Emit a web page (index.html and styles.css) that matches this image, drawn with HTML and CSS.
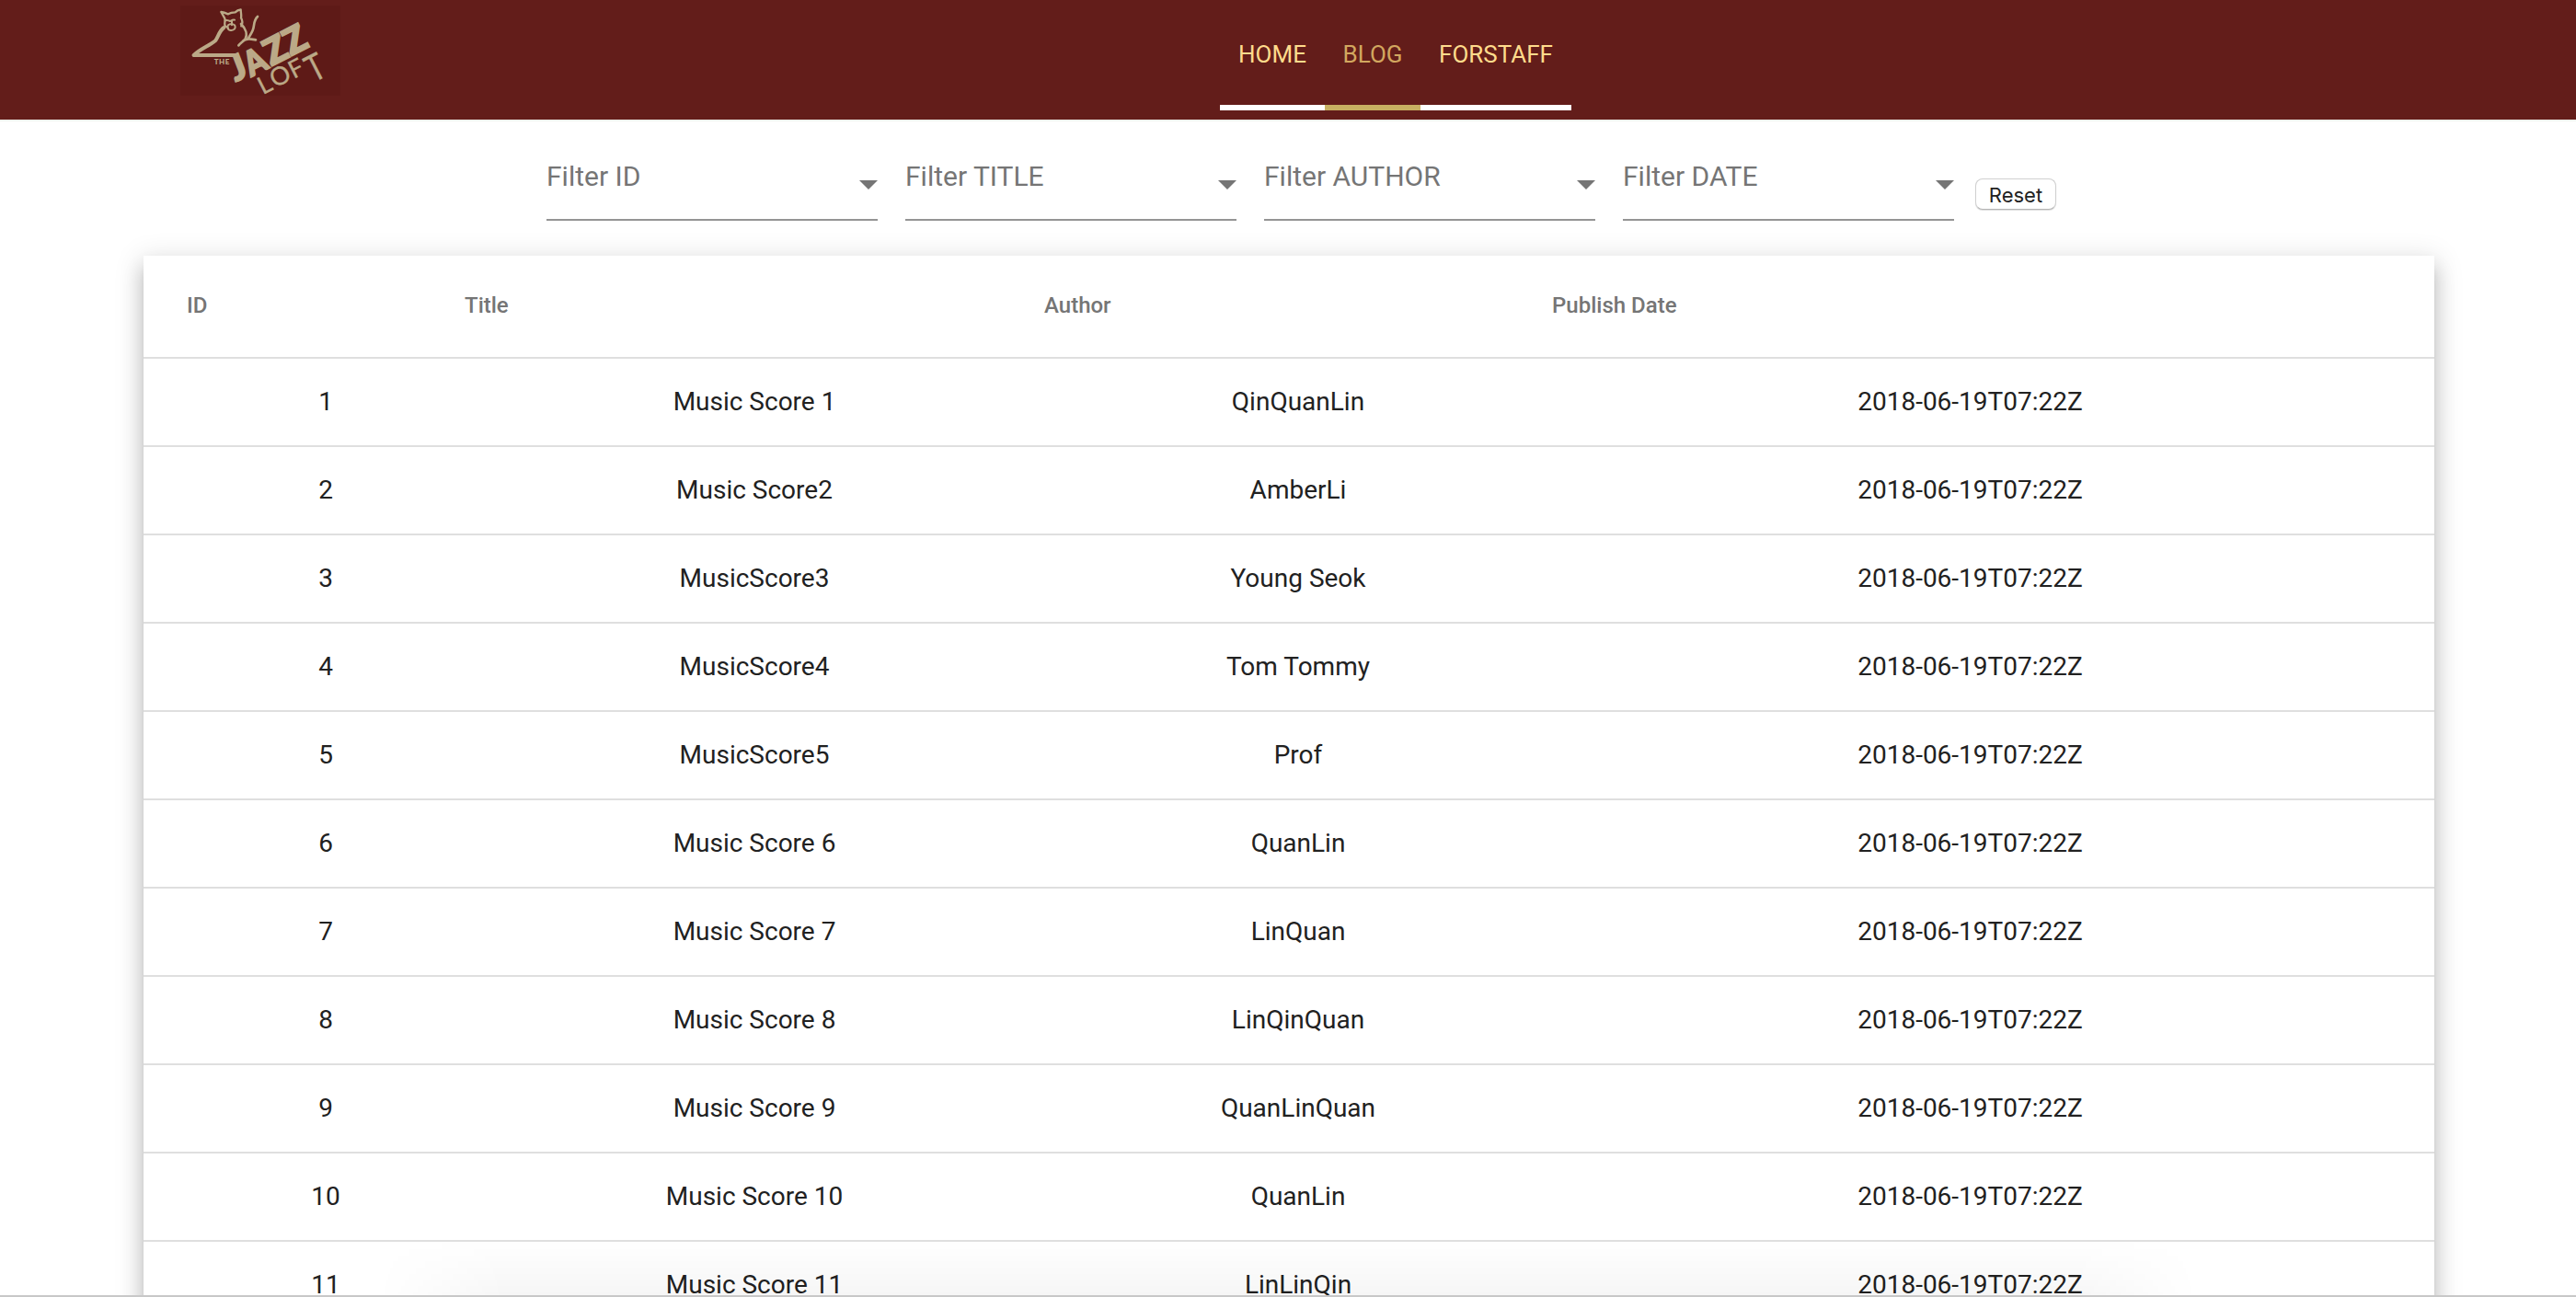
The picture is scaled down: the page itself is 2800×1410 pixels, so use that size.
FILE: index.html
```html
<!DOCTYPE html>
<html lang="en">
<head>
<meta charset="utf-8">
<title>The Jazz Loft - Blog</title>
<link rel="stylesheet" href="styles.css">
</head>
<body>
<header class="topbar">
  <svg class="logo" viewBox="48 18 522 294" role="img" aria-label="The Jazz Loft">
    <g class="logo-line">
      <path d="M190 90C176 100 172 118 163 132C142 150 112 160 92 180H230L240 196" stroke-width="12"/>
      <path d="M194 86C190 74 197 66 192 58L181 39C190 40 197 43 204 46C212 41 220 40 227 40C232 35 238 32 245 31C245 42 248 49 246 58C252 68 251 77 247 85" stroke-width="7"/>
      <path d="M194 68C199 62 205 68 210 69C216 66 220 63 225 65M216 70V82M204 82C199 93 206 100 214 99C224 99 230 91 225 82C220 77 209 77 204 82M195 85L204 91" stroke-width="6"/>
      <path d="M246 78C262 94 267 113 260 127C253 136 244 140 238 148M254 132C268 125 276 127 294 130M300 54C285 68 291 84 284 99C279 111 273 118 269 127" stroke-width="8"/>
    </g>
    <g class="logo-jazz">
      <text transform="translate(228 267) rotate(-25) skewX(-4)" font-size="112">J</text>
      <text transform="translate(279 251) rotate(-27)" font-size="112" textLength="68" lengthAdjust="spacingAndGlyphs">A</text>
      <text transform="translate(345 216) rotate(-27)" font-size="118">Z</text>
      <text transform="translate(409 183) rotate(-27)" font-size="118">Z</text>
    </g>
    <text class="logo-the" x="158" y="210" textLength="50">THE</text>
    <g class="logo-loft">
      <text transform="translate(317 310) rotate(-27)" font-size="80">L</text>
      <text transform="translate(357 288) rotate(-27)" font-size="82">O</text>
      <text transform="translate(418 258) rotate(-27)" font-size="80">F</text>
      <text transform="translate(482 270) rotate(-27)" font-size="120" textLength="56" lengthAdjust="spacingAndGlyphs">T</text>
    </g>
  </svg>
  <nav class="tabs">
    <a class="tab tab-home">HOME</a>
    <a class="tab tab-blog active">BLOG</a>
    <a class="tab tab-staff">FORSTAFF</a>
  </nav>
</header>
<main>
  <form class="filters">
    <div class="select"><span>Filter ID</span><i class="arrow"></i></div>
    <div class="select"><span>Filter TITLE</span><i class="arrow"></i></div>
    <div class="select"><span>Filter AUTHOR</span><i class="arrow"></i></div>
    <div class="select"><span>Filter DATE</span><i class="arrow"></i></div>
    <button class="reset" type="button">Reset</button>
  </form>
  <section class="card">
    <div class="row head"><span>ID</span><span>Title</span><span>Author</span><span>Publish Date</span></div>
    <div class="row"><span>1</span><span>Music Score 1</span><span>QinQuanLin</span><span>2018-06-19T07:22Z</span></div>
    <div class="row"><span>2</span><span>Music Score2</span><span>AmberLi</span><span>2018-06-19T07:22Z</span></div>
    <div class="row"><span>3</span><span>MusicScore3</span><span>Young Seok</span><span>2018-06-19T07:22Z</span></div>
    <div class="row"><span>4</span><span>MusicScore4</span><span>Tom Tommy</span><span>2018-06-19T07:22Z</span></div>
    <div class="row"><span>5</span><span>MusicScore5</span><span>Prof</span><span>2018-06-19T07:22Z</span></div>
    <div class="row"><span>6</span><span>Music Score 6</span><span>QuanLin</span><span>2018-06-19T07:22Z</span></div>
    <div class="row"><span>7</span><span>Music Score 7</span><span>LinQuan</span><span>2018-06-19T07:22Z</span></div>
    <div class="row"><span>8</span><span>Music Score 8</span><span>LinQinQuan</span><span>2018-06-19T07:22Z</span></div>
    <div class="row"><span>9</span><span>Music Score 9</span><span>QuanLinQuan</span><span>2018-06-19T07:22Z</span></div>
    <div class="row"><span>10</span><span>Music Score 10</span><span>QuanLin</span><span>2018-06-19T07:22Z</span></div>
    <div class="row"><span>11</span><span>Music Score 11</span><span>LinLinQin</span><span>2018-06-19T07:22Z</span></div>
  </section>
</main>
<div class="bottom-edge"></div>
</body>
</html>
```
FILE: styles.css
```css
* { box-sizing: border-box; }

html, body {
  margin: 0;
  height: 1410px;
  overflow: hidden;
}

body {
  position: relative;
  background: #fff;
  font-family: Roboto, "Liberation Sans", sans-serif;
  color: #212121;
}

.topbar {
  display: flex;
  height: 130px;
  padding-left: 196px;
  background: #631d1a;
  box-shadow: 0 2px 0 #f0f3ee;
}

.logo {
  width: 174px;
  height: 98px;
  margin-top: 6px;
  background: #5e1a17;
  overflow: visible;
}

.logo-line { fill: none; stroke: #bba987; stroke-linecap: round; stroke-linejoin: round; }
.logo-jazz { fill: #bba987; stroke: #bba987; stroke-width: 6px; font-family: Lato, sans-serif; font-weight: 900; }
.logo-the { fill: #bba987; font-family: Lato, sans-serif; font-weight: 900; font-size: 24px; }
.logo-loft { fill: #bba987; stroke: #bba987; stroke-width: 1px; font-family: Lato, sans-serif; font-weight: 400; }

.tabs {
  display: flex;
  height: 120px;
  margin-left: 956px;
}

.tab {
  display: flex;
  justify-content: center;
  padding-top: 44px;
  border-bottom: 6px solid #fff;
  font-size: 26px;
  line-height: 30px;
  color: #ffdb8c;
}

.tab-home { width: 114px; }
.tab-blog { width: 104px; }
.tab-staff { width: 164px; }
.tab.active { color: #d2a75f; border-color: #c8b062; }

.filters {
  display: flex;
  height: 148px;
  padding: 36px 0 0 594px;
  gap: 30px;
}

.select {
  display: flex;
  justify-content: space-between;
  width: 360px;
  height: 74px;
  padding-top: 8px;
  border-bottom: 2px solid #949494;
  font-size: 30px;
  line-height: 36px;
  color: #757575;
}

.arrow {
  width: 0;
  height: 0;
  margin-top: 22px;
  border: 10px solid transparent;
  border-top-color: #757575;
  border-bottom: 0;
}

.reset {
  width: 88px;
  height: 34px;
  margin: 28px 0 0 -7px;
  padding: 1px 0 0;
  border: 1px solid #d0d0d0;
  border-bottom-color: #b5b5b5;
  border-radius: 8px;
  background: #fff;
  box-shadow: 0 1px 1px #ddd;
  font: 22px/30px Inter, sans-serif;
  color: #222;
}

.card {
  width: 2490px;
  margin-left: 156px;
  background: #fff;
  box-shadow: 0 10px 10px -6px rgba(0,0,0,.2), 0 16px 20px 2px rgba(0,0,0,.14), 0 6px 28px 4px rgba(0,0,0,.12);
}

.row {
  display: grid;
  grid-template-columns: 302px 630px 552px 909px;
  align-items: center;
  height: 96px;
  padding: 0 0 2px 47px;
  border-bottom: 2px solid #dfdfdf;
  font-size: 28px;
  text-align: center;
}

.head {
  height: 112px;
  font-size: 24px;
  font-weight: 500;
  color: #757575;
  text-align: left;
}

.bottom-edge {
  position: absolute;
  left: 0;
  right: 0;
  bottom: 0;
  height: 2px;
  background: #c8c8c8;
}

.bottom-edge::before {
  content: "";
  position: absolute;
  left: 410px;
  right: 410px;
  bottom: 2px;
  height: 60px;
  background: linear-gradient(transparent, rgba(0,0,0,.035));
  -webkit-mask-image: linear-gradient(90deg, transparent, #000 140px, #000 calc(100% - 140px), transparent);
  mask-image: linear-gradient(90deg, transparent, #000 140px, #000 calc(100% - 140px), transparent);
}
```
